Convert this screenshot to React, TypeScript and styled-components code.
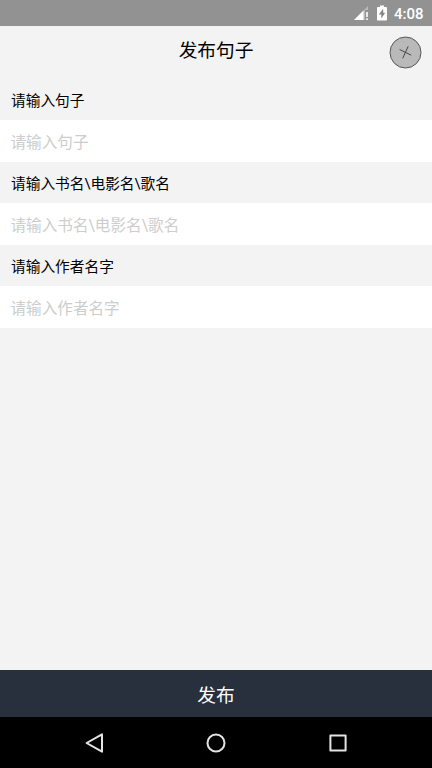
import React from "react";
import styled, { createGlobalStyle } from "styled-components";

const GlobalStyle = createGlobalStyle`
  * { box-sizing: border-box; }
  body { margin: 0; font-family: Roboto, "Noto Sans CJK SC", sans-serif; }
`;

const Screen = styled.div`
  width: 100%;
  height: 768px;
  display: flex;
  flex-direction: column;
  overflow: hidden;
  background: #f3f3f3;
`;

const StatusBar = styled.div`
  height: 26px;
  flex: none;
  display: flex;
  align-items: center;
  justify-content: flex-end;
  padding-right: 8px;
  background: #929292;
  color: #fff;
`;

const SignalIcon = styled.svg`
  width: 16px;
  height: 16px;
  margin-right: 7px;
`;

const BatteryIcon = styled.svg`
  width: 10px;
  height: 16px;
  margin-right: 7px;
`;

const Clock = styled.time`
  width: 30px;
  font-size: 15px;
  font-weight: 500;
  line-height: 26px;
  margin-top: 2px;
  white-space: nowrap;
`;

const Header = styled.header`
  height: 52.5px;
  flex: none;
  display: grid;
  grid-template-columns: 1fr auto 1fr;
  padding: 0 10px;
`;

const Title = styled.h1`
  grid-column: 2;
  margin: 0;
  font-size: 18.7px;
  font-weight: 400;
  line-height: 50px;
  color: #000;
`;

const CloseButton = styled.button`
  justify-self: end;
  width: 33px;
  height: 33px;
  margin-top: 10px;
  padding: 0;
  border: 0;
  background: none;

  svg { display: block; }
`;

const Form = styled.form`
  flex: 1;
  display: flex;
  flex-direction: column;
`;

const Label = styled.label`
  height: 41.6px;
  padding-left: 11px;
  font-size: 14.7px;
  line-height: 45px;
  color: #000;
`;

const Input = styled.input`
  height: 41.6px;
  width: 100%;
  padding: 4px 10.5px 0;
  border: 0;
  outline: 0;
  border-radius: 0;
  background: #fff;
  font-family: inherit;
  font-size: 15.6px;

  &::placeholder { color: #cdcdcd; opacity: 1; }
`;

const Submit = styled.button`
  height: 47px;
  flex: none;
  padding: 5px 0 0;
  border: 0;
  background: #282f3d;
  color: #fff;
  font-family: inherit;
  font-size: 18.7px;
  line-height: 42px;
`;

const NavBar = styled.nav`
  height: 51px;
  flex: none;
  display: grid;
  grid-template-columns: repeat(3, 121.5px);
  justify-content: center;
  justify-items: center;
  align-items: center;
  background: #000;
`;

const NavIcon = styled.svg`
  width: 24px;
  height: 24px;
  fill: none;
  stroke: #e4e4e4;
  stroke-width: 2;
  stroke-linejoin: round;
`;

const fields = [
  { id: "sentence", text: "请输入句子" },
  { id: "source", text: "请输入书名\\电影名\\歌名" },
  { id: "author", text: "请输入作者名字" },
];

export default function App() {
  return (
    <>
      <GlobalStyle />
      <Screen>
        <StatusBar>
          <SignalIcon viewBox="0 0 16 16">
            <path d="M0 15 14 1v4h-3v10z" fill="#b9b9b9" />
            <path d="M0 15 9.5 5.5V15z" fill="#fff" />
            <path d="M12.2 7h1.6v5h-1.6zM12.2 13.2h1.6V15h-1.6z" fill="#fff" />
          </SignalIcon>
          <BatteryIcon viewBox="0 0 10 16">
            <path d="M3 .5h4V2h2q1 0 1 1v11.5q0 1-1 1H1q-1 0-1-1V3q0-1 1-1h2z" fill="#fff" />
            <path d="M6.2 3.8 1.8 9.5h2.5v4L8.2 7.8H6.2z" fill="#858585" />
          </BatteryIcon>
          <Clock>4:08</Clock>
        </StatusBar>
        <Header>
          <Title>发布句子</Title>
          <CloseButton aria-label="关闭">
            <svg width="33" height="33" viewBox="0 0 33 33">
              <circle cx="16.5" cy="16.5" r="15.5" fill="#b9b9b9" stroke="#555" strokeWidth="1" />
              <path d="m10.6 13.5 11.6 5.7M19.2 10.3l-5.5 12" stroke="#484848" strokeWidth="1" />
            </svg>
          </CloseButton>
        </Header>
        <Form>
          {fields.map((field) => (
            <React.Fragment key={field.id}>
              <Label htmlFor={field.id}>{field.text}</Label>
              <Input id={field.id} placeholder={field.text} />
            </React.Fragment>
          ))}
        </Form>
        <Submit>发布</Submit>
        <NavBar>
          <NavIcon viewBox="0 0 24 24"><path d="M3.6 12 19 3.3v17.4z" /></NavIcon>
          <NavIcon viewBox="0 0 24 24"><circle cx="12" cy="12" r="8.5" /></NavIcon>
          <NavIcon viewBox="0 0 24 24"><path d="M4.4 4.4h15.2v15.2H4.4z" /></NavIcon>
        </NavBar>
      </Screen>
    </>
  );
}
